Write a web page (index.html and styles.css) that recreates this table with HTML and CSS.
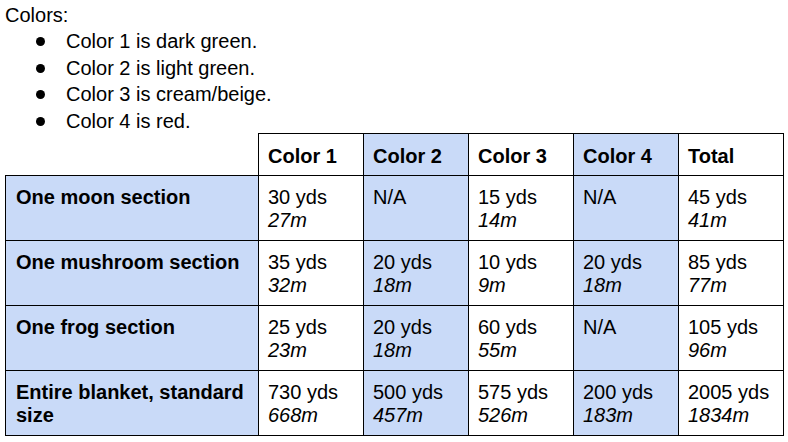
FILE: index.html
```html
<!DOCTYPE html>
<html>
<head>
<meta charset="utf-8">
<link rel="stylesheet" href="styles.css">
</head>
<body>
<p class="intro">Colors:</p>
<ul class="colors">
  <li>Color 1 is dark green.</li>
  <li>Color 2 is light green.</li>
  <li>Color 3 is cream/beige.</li>
  <li>Color 4 is red.</li>
</ul>
<table class="yardage">
  <colgroup>
    <col class="c-label">
    <col class="c-num">
    <col class="c-num">
    <col class="c-num">
    <col class="c-num">
    <col class="c-num">
  </colgroup>
  <thead>
    <tr>
      <th class="corner"></th>
      <th>Color 1</th>
      <th class="blue">Color 2</th>
      <th>Color 3</th>
      <th class="blue">Color 4</th>
      <th>Total</th>
    </tr>
  </thead>
  <tbody>
    <tr>
      <th class="row-head">One moon section</th>
      <td>30 yds<br><em>27m</em></td>
      <td class="blue">N/A</td>
      <td>15 yds<br><em>14m</em></td>
      <td class="blue">N/A</td>
      <td>45 yds<br><em>41m</em></td>
    </tr>
    <tr>
      <th class="row-head">One mushroom section</th>
      <td>35 yds<br><em>32m</em></td>
      <td class="blue">20 yds<br><em>18m</em></td>
      <td>10 yds<br><em>9m</em></td>
      <td class="blue">20 yds<br><em>18m</em></td>
      <td>85 yds<br><em>77m</em></td>
    </tr>
    <tr>
      <th class="row-head">One frog section</th>
      <td>25 yds<br><em>23m</em></td>
      <td class="blue">20 yds<br><em>18m</em></td>
      <td>60 yds<br><em>55m</em></td>
      <td class="blue">N/A</td>
      <td>105 yds<br><em>96m</em></td>
    </tr>
    <tr>
      <th class="row-head">Entire blanket, standard size</th>
      <td>730 yds<br><em>668m</em></td>
      <td class="blue">500 yds<br><em>457m</em></td>
      <td>575 yds<br><em>526m</em></td>
      <td class="blue">200 yds<br><em>183m</em></td>
      <td>2005 yds<br><em>1834m</em></td>
    </tr>
  </tbody>
</table>
</body>
</html>
```

FILE: styles.css
```css
html, body {
  margin: 0;
  background: #ffffff;
}
body {
  padding: 2px 5px 0 5px;
  font-family: "Liberation Sans", Arial, sans-serif;
  font-size: 20px;
  color: #000000;
}
.intro {
  margin: 0;
  line-height: 26.4px;
}
.colors {
  margin: 0;
  padding: 0 0 0 61px;
  list-style: none;
  line-height: 26.4px;
}
.colors li {
  position: relative;
}
.colors li::before {
  content: "";
  position: absolute;
  left: -30px;
  top: 9px;
  width: 9px;
  height: 9px;
  border-radius: 50%;
  background: #000000;
}
.yardage {
  margin-top: -1px;
  border-collapse: collapse;
  table-layout: fixed;
  width: 779px;
  font-size: 20px;
  line-height: 23px;
}
.c-label { width: 253px; }
.c-num { width: 105px; }
.yardage th,
.yardage td {
  border: 1px solid #000000;
  padding: 10px 9px 8px 9px;
  text-align: left;
  vertical-align: top;
  font-weight: normal;
}
.yardage thead th {
  font-weight: bold;
  padding-top: 11px;
  padding-bottom: 7px;
}
.yardage .row-head {
  font-weight: bold;
  padding-left: 10px;
  background: #c9daf8;
}
.yardage .corner {
  border-top: none;
  border-left: none;
}
.yardage .blue {
  background: #c9daf8;
}
.yardage em {
  font-style: italic;
}
```
